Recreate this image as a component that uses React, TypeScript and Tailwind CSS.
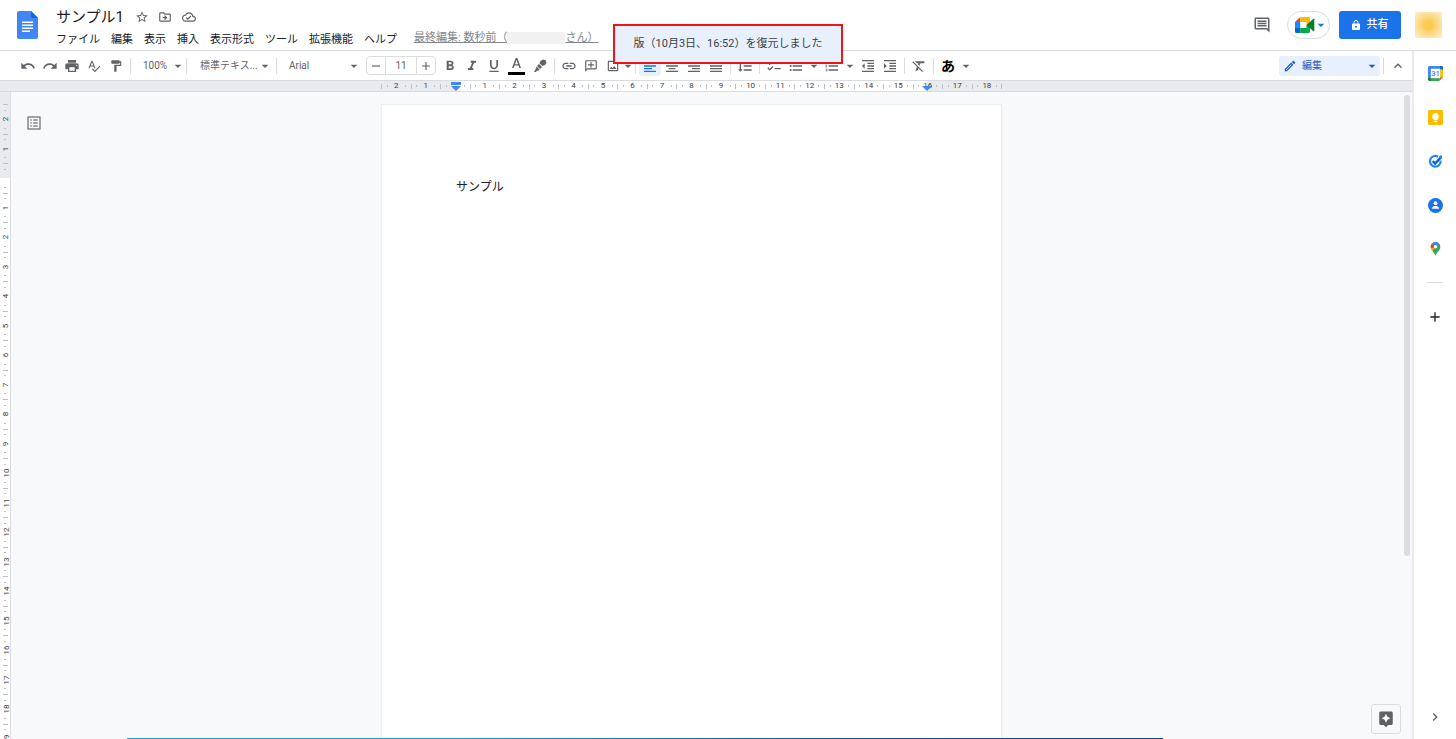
import type { ReactNode } from "react";
import {
  MdAdd,
  MdArrowDropDown,
  MdAssistant,
  MdChecklist,
  MdChevronRight,
  MdFormatAlignCenter,
  MdFormatAlignJustify,
  MdFormatAlignLeft,
  MdFormatAlignRight,
  MdFormatBold,
  MdFormatClear,
  MdFormatIndentDecrease,
  MdFormatIndentIncrease,
  MdFormatItalic,
  MdFormatLineSpacing,
  MdFormatListBulleted,
  MdFormatListNumbered,
  MdFormatPaint,
  MdFormatUnderlined,
  MdKeyboardArrowUp,
  MdLink,
  MdListAlt,
  MdOutlineAddComment,
  MdOutlineCloudDone,
  MdOutlineDriveFileMove,
  MdOutlineEdit,
  MdOutlineImage,
  MdOutlineInsertComment,
  MdPrint,
  MdRedo,
  MdRemove,
  MdSpellcheck,
  MdStarBorder,
  MdUndo,
} from "react-icons/md";

const menus = ["ファイル", "編集", "表示", "挿入", "表示形式", "ツール", "拡張機能", "ヘルプ"];

const horizontalMarks = ["2", "1", "", ...Array.from({ length: 18 }, (_, i) => String(i + 1))];
const verticalMarks = ["2", "1", "", ...Array.from({ length: 19 }, (_, i) => String(i + 1))];

function ToolButton({
  label,
  children,
  active,
}: {
  label: string;
  children: ReactNode;
  active?: boolean;
}) {
  return (
    <button
      type="button"
      aria-label={label}
      className={
        active
          ? "flex h-5 w-[22px] shrink-0 items-center justify-center rounded-sm bg-[#e8f0fe] text-base text-[#1a73e8]"
          : "flex h-5 w-[22px] shrink-0 items-center justify-center text-base text-[#5f6368]"
      }
    >
      {children}
    </button>
  );
}

function MoreArrow({ label }: { label: string }) {
  return (
    <button type="button" aria-label={label} className="flex w-[14px] shrink-0 justify-center text-base text-[#5f6368]">
      <MdArrowDropDown className="shrink-0" />
    </button>
  );
}

function Divider() {
  return <div className="mx-[3px] h-4 w-px shrink-0 bg-[#dadce0]" />;
}

function ToolSelect({ label, value, className }: { label: string; value: string; className: string }) {
  return (
    <div className={`relative shrink-0 ${className}`}>
      <select aria-label={label} className="h-5 w-full appearance-none bg-transparent pl-[9px] text-[10px] text-[#5f6368] outline-none">
        <option>{value}</option>
      </select>
      <MdArrowDropDown className="pointer-events-none absolute top-[2px] right-0 text-base text-[#5f6368]" />
    </div>
  );
}

function DocsLogo() {
  return (
    <svg viewBox="0 0 21 28" className="h-7 w-[21px]" aria-hidden="true">
      <path d="M2 0h12l7 7v19a2 2 0 0 1-2 2H2a2 2 0 0 1-2-2V2a2 2 0 0 1 2-2z" fill="#4285f4" />
      <path d="M14 0l7 7h-5a2 2 0 0 1-2-2z" fill="#1967d2" />
      <path d="M5 10.500h11V12H5zM5 13.500h11V15H5zM5 16.500h11V18H5zM5 19.500h8V21H5z" fill="#fff" />
    </svg>
  );
}

function MeetLogo() {
  return (
    <svg viewBox="0 0 20 16" className="h-4 w-5 shrink-0" aria-hidden="true">
      <path d="M5.2 0v5H0z" fill="#ea4335" />
      <path d="M0 5h5.2v6H0z" fill="#2684fc" />
      <path d="M0 11h5.2v5H1.5A1.5 1.5 0 0 1 0 14.5z" fill="#0066da" />
      <path d="M5.2 0h8.3A1.5 1.5 0 0 1 15 1.5V6l-3.5 3V5H5.2z" fill="#ffba00" />
      <path d="M5.2 11h6.300V8l3.500 2v4.5a1.5 1.5 0 0 1-1.5 1.5H5.200z" fill="#00ac47" />
      <path d="M11.5 8l6.900-6.200c.4-.3.9 0 .9.4v11.6c0 .5-.5.7-.9.4z" fill="#00832d" />
    </svg>
  );
}

function CalendarLogo() {
  return (
    <svg viewBox="0 0 16 16" className="size-[15px]" aria-hidden="true">
      <path d="M1.5 0H12v4H4v8H0V1.5A1.5 1.5 0 0 1 1.5 0z" fill="#4285f4" />
      <path d="M12 0h2.5A1.5 1.5 0 0 1 16 1.5V4h-4z" fill="#1967d2" />
      <path d="M12 4h4v8h-4z" fill="#fbbc04" />
      <path d="M4 12h8v4H4z" fill="#34a853" />
      <path d="M0 12h4v4H1.5A1.5 1.5 0 0 1 0 14.5z" fill="#188038" />
      <path d="M12 12h4l-4 4z" fill="#ea4335" />
      <path d="M3 3h10v10H3z" fill="#fff" />
      <text x="8" y="10.800" textAnchor="middle" fontSize="8" fontWeight="500" fontFamily="Roboto, sans-serif" fill="#4285f4">
        31
      </text>
    </svg>
  );
}

function KeepLogo() {
  return (
    <svg viewBox="0 0 16 16" className="size-[15px]" aria-hidden="true">
      <rect width="16" height="16" rx="1.5" fill="#fbbc04" />
      <path d="M8 3.300a3.600 3.600 0 0 0-2 6.600V11h4V9.900a3.600 3.600 0 0 0-2-6.600zM6.300 11.700h3.400v1H6.300z" fill="#fff" />
    </svg>
  );
}

function TasksLogo() {
  return (
    <svg viewBox="0 0 16 16" className="size-[15px]" aria-hidden="true" fill="none">
      <path d="M10.800 3A5.700 5.700 0 1 0 13.400 7" stroke="#2684fc" strokeWidth="2.400" />
      <path d="M5 7.500l2.600 2.600L14.200 3" stroke="#0066da" strokeWidth="2.600" />
      <circle cx="13.500" cy="3" r="1.600" fill="#2684fc" />
    </svg>
  );
}

function ContactsLogo() {
  return (
    <svg viewBox="0 0 16 16" className="size-[15px]" aria-hidden="true">
      <circle cx="8" cy="8" r="8" fill="#1a73e8" />
      <circle cx="8" cy="5.500" r="2" fill="#fff" />
      <path d="M4.300 11.500v-.8C4.300 9.200 6.500 8.500 8 8.500s3.700.7 3.700 2.200v.8z" fill="#fff" />
    </svg>
  );
}

function MapsLogo() {
  return (
    <svg viewBox="0 0 12 16" className="h-[14px] w-[11px]" aria-hidden="true">
      <path d="M6 0a5.500 5.500 0 0 1 5.500 5.500C11.500 10 7.500 11 6 16 5.500 13 1 10 .5 5.500A5.500 5.500 0 0 1 6 0z" fill="#34a853" />
      <path d="M.5 5.500c0 2 .8 3.300 1.800 4.500L6 5.500 2 2C1 3 .5 4.200.5 5.500z" fill="#fbbc04" />
      <path d="M1.800 2A5.500 5.500 0 0 0 .7 6.800L3 7l3-2z" fill="#ea4335" />
      <path d="M1.800 2A5.500 5.500 0 0 1 11 3.300L6 5.800z" fill="#4285f4" />
      <circle cx="6" cy="5.500" r="2" fill="#fff" />
    </svg>
  );
}

function Header() {
  return (
    <header className="flex h-[51px] shrink-0 items-start border-b border-[#dadce0] bg-white pr-[14px] pl-[17px]">
      <a href="#home" aria-label="ドキュメント ホーム" className="mt-[11px]">
        <DocsLogo />
      </a>
      <div className="ml-[18px]">
        <div className="flex h-[33px] items-center">
          <h1 className="w-[76px] text-[15px] whitespace-nowrap text-[#202124]">サンプル1</h1>
          <div className="flex items-center gap-[9px] text-sm text-[#5f6368]">
            <button type="button" aria-label="スター" className="ml-[3px]">
              <MdStarBorder />
            </button>
            <button type="button" aria-label="移動">
              <MdOutlineDriveFileMove />
            </button>
            <button type="button" aria-label="ドキュメントのステータス" className="ml-px">
              <MdOutlineCloudDone />
            </button>
          </div>
        </div>
        <div className="flex h-[14px] items-center">
          <nav className="flex gap-[11px] text-[#202124]">
            {menus.map((menu) => (
              <button key={menu} type="button" className="whitespace-nowrap">
                {menu}
              </button>
            ))}
          </nav>
          <a href="#history" className="mb-1 ml-[17px] flex items-center whitespace-nowrap text-[#80868b] underline">
            最終編集: 数秒前（
            <span className="h-3 w-[58px] bg-[#f1f1f1]" />
            さん）
          </a>
        </div>
      </div>
      <div className="ml-auto flex h-[49px] items-center">
        <button type="button" aria-label="コメント履歴" className="text-[18px] text-[#5f6368]">
          <MdOutlineInsertComment />
        </button>
        <button
          type="button"
          aria-label="ビデオ通話"
          className="ml-4 flex h-7 w-[43px] items-center justify-end rounded-full border border-[#dadce0] text-base text-[#1a73e8]"
        >
          <MeetLogo />
          <MdArrowDropDown className="-ml-0.5" />
        </button>
        <button
          type="button"
          className="ml-[9px] flex h-7 w-[62px] items-center justify-center gap-[7px] rounded-[3px] bg-[#1a73e8] font-medium text-white"
        >
          <svg viewBox="0 0 8 10" className="h-[10px] w-2" aria-hidden="true">
            <path d="M2 4V2.500a2 2 0 0 1 4 0V4" fill="none" stroke="#fff" />
            <path d="M1 3.500h6a1 1 0 0 1 1 1V9a1 1 0 0 1-1 1H1a1 1 0 0 1-1-1V4.500a1 1 0 0 1 1-1zM4 5.800a1 1 0 1 0 0 2 1 1 0 0 0 0-2z" fill="#fff" />
          </svg>
          共有
        </button>
        <div className="ml-[14px] h-[26px] w-[27px] bg-radial from-[#fbcb4e] from-20% to-[#fdf0cf]" />
      </div>
    </header>
  );
}

function Toolbar() {
  return (
    <div className="flex h-[29px] shrink-0 items-center bg-white pl-[17px]">
      <ToolButton label="元に戻す"><MdUndo /></ToolButton>
      <ToolButton label="やり直し"><MdRedo /></ToolButton>
      <ToolButton label="印刷"><MdPrint /></ToolButton>
      <ToolButton label="スペルチェック"><MdSpellcheck className="text-sm" /></ToolButton>
      <ToolButton label="書式の貼り付け"><MdFormatPaint className="text-sm" /></ToolButton>
      <Divider />
      <ToolSelect label="ズーム" value="100%" className="w-[52px]" />
      <div className="h-4 w-px shrink-0 bg-[#dadce0]" />
      <div className="w-1 shrink-0" />
      <ToolSelect label="スタイル" value="標準テキス..." className="w-[82px]" />
      <Divider />
      <ToolSelect label="フォント" value="Arial" className="w-[82px]" />
      <div className="ml-1 flex h-[19px] w-[70px] shrink-0 rounded-sm border border-[#dadce0] text-[#5f6368]">
        <button type="button" aria-label="フォントサイズを縮小" className="flex w-[18px] items-center justify-center text-sm">
          <MdRemove />
        </button>
        <input
          aria-label="フォントサイズ"
          defaultValue="11"
          className="w-8 border-x border-[#dadce0] text-center text-[10px] outline-none"
        />
        <button type="button" aria-label="フォントサイズを拡大" className="flex w-[18px] items-center justify-center text-sm">
          <MdAdd />
        </button>
      </div>
      <div className="w-[3px] shrink-0" />
      <ToolButton label="太字"><MdFormatBold /></ToolButton>
      <ToolButton label="斜体"><MdFormatItalic /></ToolButton>
      <ToolButton label="下線"><MdFormatUnderlined /></ToolButton>
      <ToolButton label="テキストの色">
        <svg viewBox="0 0 17 18" className="h-[18px] w-[17px]" aria-hidden="true">
          <path d="M7.700 1h1.600L13 11h-1.600l-.9-2.500h-4L5.600 11H4zM8.500 3L7 7.200h3z" fill="#5f6368" />
          <path d="M0 15h17v3H0z" fill="#000" />
        </svg>
      </ToolButton>
      <div className="w-[2px] shrink-0" />
      <ToolButton label="ハイライト">
        <svg viewBox="0 0 14 14" className="size-[14px]" aria-hidden="true">
          <path d="M7.500 2L10 0.500 12.500 1 13.500 4 12 6 9.500 7 6.500 4.500zM6 5L9 8 7 10 4 7zM3.500 7.500L6.500 10.500 5 12 4 11.500 3 13H1l1.500-2.500z" fill="#5f6368" />
        </svg>
      </ToolButton>
      <Divider />
      <ToolButton label="リンク"><MdLink /></ToolButton>
      <ToolButton label="コメントを追加"><MdOutlineAddComment className="-scale-x-100 text-sm" /></ToolButton>
      <ToolButton label="画像"><MdOutlineImage className="text-sm" /></ToolButton>
      <button type="button" aria-label="画像の挿入方法" className="flex w-2 shrink-0 justify-center text-base text-[#5f6368]">
        <MdArrowDropDown className="shrink-0" />
      </button>
      <Divider />
      <ToolButton label="左揃え" active><MdFormatAlignLeft /></ToolButton>
      <ToolButton label="中央揃え"><MdFormatAlignCenter /></ToolButton>
      <ToolButton label="右揃え"><MdFormatAlignRight /></ToolButton>
      <ToolButton label="両端揃え"><MdFormatAlignJustify /></ToolButton>
      <Divider />
      <ToolButton label="行間隔"><MdFormatLineSpacing /></ToolButton>
      <Divider />
      <ToolButton label="チェックリスト"><MdChecklist /></ToolButton>
      <ToolButton label="箇条書き"><MdFormatListBulleted /></ToolButton>
      <MoreArrow label="箇条書きメニュー" />
      <ToolButton label="番号付きリスト"><MdFormatListNumbered /></ToolButton>
      <MoreArrow label="番号付きリストメニュー" />
      <ToolButton label="インデント減"><MdFormatIndentDecrease /></ToolButton>
      <ToolButton label="インデント増"><MdFormatIndentIncrease /></ToolButton>
      <Divider />
      <ToolButton label="書式をクリア"><MdFormatClear /></ToolButton>
      <Divider />
      <button type="button" aria-label="入力ツール" className="w-[22px] shrink-0 text-sm leading-5 font-bold text-black">
        あ
      </button>
      <MoreArrow label="入力ツールメニュー" />
      <div className="relative ml-auto w-[101px] shrink-0 rounded-[3px] bg-[#e8f0fe] text-[#185abc]">
        <MdOutlineEdit className="pointer-events-none absolute top-[3px] left-1 text-sm" />
        <select aria-label="編集モード" className="h-5 w-full appearance-none bg-transparent pl-[23px] text-[10px] outline-none">
          <option>編集</option>
        </select>
        <MdArrowDropDown className="pointer-events-none absolute top-[2px] right-0 text-base" />
      </div>
      <Divider />
      <button type="button" aria-label="メニューを非表示" className="mr-[3px] flex w-[22px] justify-center text-base text-[#5f6368]">
        <MdKeyboardArrowUp />
      </button>
    </div>
  );
}

function HorizontalRuler() {
  return (
    <div className="flex h-3 shrink-0 justify-center border-y border-[#dadce0] bg-[#e8eaed] pr-[29px]">
      <div className="relative flex w-[621px] items-stretch">
        <div className="absolute inset-y-0 right-[75px] left-[75px] bg-white" />
        {horizontalMarks.map((mark, i) => (
          <div key={i} className="relative flex flex-1 items-center justify-between">
            <span className="h-[5px] w-px bg-[#bdc1c6]" />
            <span className="h-[2px] w-px bg-[#bdc1c6]" />
            <span className="flex w-2 justify-center text-[8px] leading-[10px] text-[#3c4043]">{mark}</span>
            <span className="h-[2px] w-px bg-[#bdc1c6]" />
            <span />
          </div>
        ))}
        <span className="h-[5px] w-px self-center bg-[#bdc1c6]" />
        <svg viewBox="0 0 10 9" className="absolute top-px left-[70px] h-[9px] w-[10px]" aria-hidden="true">
          <path d="M0 0h10v3H0zM0 4h10L5 9z" fill="#4285f4" />
        </svg>
        <svg viewBox="0 0 10 5" className="absolute top-[5px] right-[70px] h-[5px] w-[10px]" aria-hidden="true">
          <path d="M0 0h10L5 5z" fill="#4285f4" />
        </svg>
      </div>
    </div>
  );
}

function VerticalRuler() {
  return (
    <div className="w-[11px] shrink-0 overflow-hidden border-r border-[#dadce0] bg-white">
      <div className="h-3 bg-[#e8eaed]" />
      <div className="flex h-[649px] flex-col">
        {verticalMarks.map((mark, i) => (
          <div
            key={i}
            className={
              i < 2
                ? "flex flex-1 flex-col items-center justify-between bg-[#e8eaed]"
                : i === 2
                  ? "flex flex-1 flex-col items-center justify-between bg-linear-to-b from-[#e8eaed] from-50% to-white to-50%"
                  : "flex flex-1 flex-col items-center justify-between"
            }
          >
            <span className="h-px w-[5px] bg-[#bdc1c6]" />
            <span className="h-px w-[2px] bg-[#bdc1c6]" />
            <span className="flex h-2 items-center pl-[2px] text-[8px] leading-[10px] text-[#3c4043]">
              <span className="-rotate-90">{mark}</span>
            </span>
            <span className="h-px w-[2px] bg-[#bdc1c6]" />
            <span />
          </div>
        ))}
      </div>
    </div>
  );
}

function SidePanel() {
  const apps = [
    { name: "カレンダー", logo: <CalendarLogo /> },
    { name: "Keep", logo: <KeepLogo /> },
    { name: "ToDo リスト", logo: <TasksLogo /> },
    { name: "連絡先", logo: <ContactsLogo /> },
    { name: "マップ", logo: <MapsLogo /> },
  ];

  return (
    <aside className="flex w-11 shrink-0 flex-col items-center border-l-2 border-[#e8eaed] bg-white">
      {apps.map((app) => (
        <button key={app.name} type="button" aria-label={app.name} className="flex h-11 w-full items-center justify-center">
          {app.logo}
        </button>
      ))}
      <div className="mt-[11px] h-px w-4 bg-[#dadce0]" />
      <button type="button" aria-label="アドオンを取得" className="mt-3 flex h-11 w-full items-center justify-center text-base text-[#202124]">
        <MdAdd />
      </button>
      <button type="button" aria-label="サイドパネルを非表示" className="mt-auto mb-[14px] text-base text-[#5f6368]">
        <MdChevronRight />
      </button>
    </aside>
  );
}

export default function App() {
  return (
    <div className="relative flex h-screen flex-col overflow-hidden bg-white font-[Roboto,'Noto_Sans_CJK_JP',sans-serif] text-[11px] leading-[14px]">
      <Header />
      <div className="flex min-h-0 flex-1">
        <main className="flex min-w-0 flex-1 flex-col">
          <Toolbar />
          <HorizontalRuler />
          <div className="relative flex min-h-0 flex-1 bg-[#f8f9fa]">
            <VerticalRuler />
            <div className="flex min-w-0 flex-1 justify-center pt-3 pr-10">
              <article className="w-[621px] border border-b-0 border-[#edeef0] bg-white px-[74px] pt-[74px] text-xs text-[#202124] shadow-xs">
                <p>サンプル</p>
              </article>
            </div>
            <button type="button" aria-label="ドキュメントの概要を表示" className="absolute top-[22px] left-[25px] text-[18px] text-[#80868b]">
              <MdListAlt />
            </button>
            {/* scroll thumb */}
            <div className="absolute top-[3px] right-[2px] h-[461px] w-[6px] rounded-full bg-[#dadce0]" />
            <button
              type="button"
              aria-label="データ探索"
              className="absolute right-[11px] bottom-[5px] flex size-[30px] items-center justify-center rounded-[3px] border border-[#dadce0] bg-[#f8f9fa] text-lg text-[#616161]"
            >
              <MdAssistant />
            </button>
          </div>
        </main>
        <SidePanel />
      </div>
      <div
        role="status"
        className="absolute top-6 left-1/2 flex h-10 w-[230px] -translate-x-1/2 items-center justify-center border-2 border-[#f01414] bg-[#e8f0fe] whitespace-nowrap text-[#3c4043]"
      >
        版（10月3日、16:52）を復元しました
      </div>
      <div className="absolute right-[293px] bottom-0 left-[127px] h-px bg-linear-to-r from-[#159fdc] from-30% to-[#0f47a1] to-80%" />
    </div>
  );
}
